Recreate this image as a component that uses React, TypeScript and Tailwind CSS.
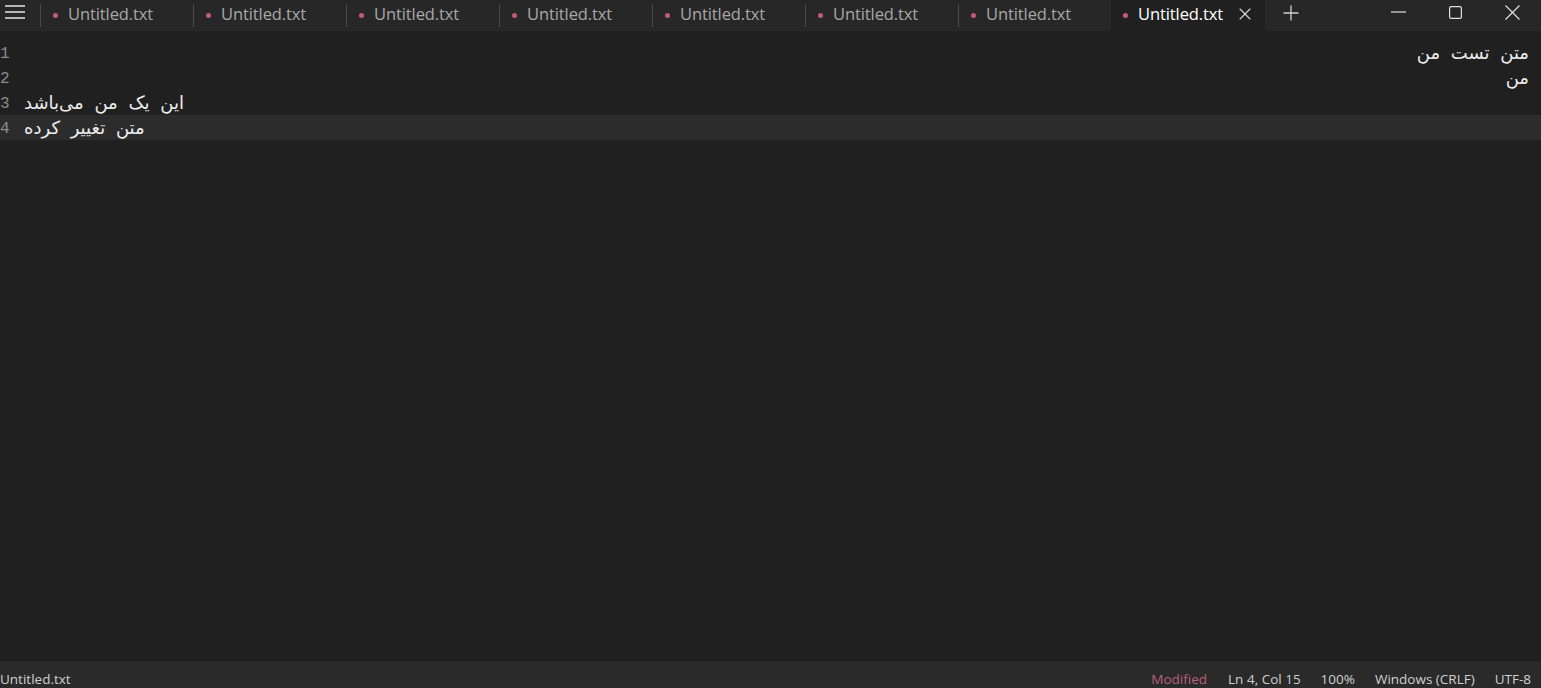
import { X, Plus } from 'lucide-react';

// Tab strip of a notepad-style editor
const tabs = Array.from({ length: 8 }, (_, i) => ({ name: 'Untitled.txt', active: i === 7 }));

const lines = [
  { n: 1, text: 'متن تست من', rtl: true },
  { n: 2, text: 'من', rtl: true },
  { n: 3, text: 'این یک من می‌باشد', rtl: false },
  { n: 4, text: 'متن تغییر کرده', rtl: false, current: true },
];

export default function App() {
  return (
    <div className="w-[1541px] h-[688px] flex flex-col bg-[#202020] overflow-hidden text-[#d4d4d4]" style={{ fontFamily: '"Open Sans", "Noto Sans", "DejaVu Sans", sans-serif' }}>
      {/* Title / tab bar */}
      <div className="h-[31px] flex items-stretch bg-[#272727] shrink-0">
        <div className="w-[40px] flex items-start pt-[5px] pl-[5px] text-[#e6e6e6]">
          <svg width="21" height="14" viewBox="0 0 21 14" fill="none" stroke="currentColor" strokeWidth="1.4">
            <path d="M0 1h20M0 7h20M0 13h20" />
          </svg>
        </div>
        {tabs.map((t, i) => (
          <div key={i} className="flex items-stretch">
            {!t.active && <div className="w-px my-[4px] bg-[#4a4a4a]" />}
            <div className={`flex items-center pl-[12px] pb-[3px] ${t.active ? 'w-[154px] bg-[#202020] text-white' : 'w-[152px] text-[#a8a8a8]'}`}>
              <span className="w-[5px] h-[5px] rounded-full bg-[#c25a78] mr-[10px] mt-[2px]" />
              <span className="text-[16.5px] leading-none tracking-[-0.1px]">{t.name}</span>
              {t.active && <X size={20} strokeWidth={1.3} className="ml-[12px] text-[#d8d8d8]" />}
            </div>
          </div>
        ))}
        <div className="flex items-center pl-[14px] pb-[5px] text-[#d0d0d0]">
          <Plus size={24} strokeWidth={1.3} />
        </div>
        <div className="flex-1" />
        <div className="flex items-start pt-[4px] text-[#e0e0e0]">
          <div className="w-[58px] h-[16px] flex items-center justify-center">
            <svg width="15" height="2" viewBox="0 0 15 2"><path d="M0 1h15" stroke="currentColor" strokeWidth="1.2" /></svg>
          </div>
          <div className="w-[56px] h-[16px] flex items-center justify-center">
            <svg width="13" height="13" viewBox="0 0 13 13"><rect x="0.6" y="0.6" width="11.8" height="11.8" rx="1.5" fill="none" stroke="currentColor" strokeWidth="1.2" /></svg>
          </div>
          <div className="w-[58px] h-[16px] flex items-center justify-center">
            <svg width="15" height="15" viewBox="0 0 15 15"><path d="M0.5 0.5l14 14M14.5 0.5l-14 14" stroke="currentColor" strokeWidth="1.2" /></svg>
          </div>
        </div>
      </div>

      {/* Editor */}
      <div className="flex-1 pt-[9px]">
        {lines.map((l) => (
          <div key={l.n} className={`h-[25px] flex items-center ${l.current ? 'bg-[#2c2c2c]' : ''}`}>
            <span className="w-[24px] pt-[3px] text-[16px] text-[#8c8c8c] leading-none" style={{ fontFamily: '"Liberation Mono", monospace' }}>
              {l.n}
            </span>
            <span
              dir="rtl"
              className={`flex-1 text-[18px] text-[#ececec] leading-none [word-spacing:5px] ${l.rtl ? 'text-right pr-[12px]' : 'text-left'}`}
              style={{ fontFamily: '"DejaVu Sans", "Noto Sans", sans-serif' }}
            >
              {l.rtl ? l.text : <span className="inline-block" dir="rtl">{l.text}</span>}
            </span>
          </div>
        ))}
      </div>

      {/* Status bar */}
      <div className="h-[27px] shrink-0 bg-[#2a2a2a] flex items-center pt-[9px] text-[13.5px] text-[#cfcfcf]">
        <span className="flex-1">Untitled.txt</span>
        <span className="text-[#b9607a] mr-[21px]">Modified</span>
        <span className="mr-[20px]">Ln 4, Col 15</span>
        <span className="mr-[20px]">100%</span>
        <span className="mr-[20px]">Windows (CRLF)</span>
        <span className="mr-[10px]">UTF-8</span>
      </div>
    </div>
  );
}
